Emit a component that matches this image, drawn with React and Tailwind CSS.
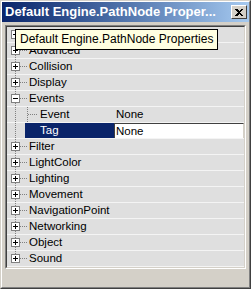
const rows = [
  { label: 'AI', kind: 'plus' },
  { label: 'Advanced', kind: 'plus' },
  { label: 'Collision', kind: 'plus' },
  { label: 'Display', kind: 'plus' },
  { label: 'Events', kind: 'minus' },
  { label: 'Event', kind: 'child', value: 'None' },
  { label: 'Tag', kind: 'child', value: 'None', last: true, selected: true },
  { label: 'Filter', kind: 'plus' },
  { label: 'LightColor', kind: 'plus' },
  { label: 'Lighting', kind: 'plus' },
  { label: 'Movement', kind: 'plus' },
  { label: 'NavigationPoint', kind: 'plus' },
  { label: 'Networking', kind: 'plus' },
  { label: 'Object', kind: 'plus' },
  { label: 'Sound', kind: 'plus' },
]

const font = { fontFamily: '"Liberation Sans", Arial, sans-serif' }

// tree connector drawing for one row
const TreeLines = ({ row, first, last }) => {
  const dots = '#808080'
  if (row.kind === 'child') {
    const c = row.selected ? '#ffffff' : dots
    return (
      <svg width="32" height="16" className="shrink-0" shapeRendering="crispEdges">
        <line x1="8.5" y1="0" x2="8.5" y2="16" stroke={dots} strokeDasharray="1 1" />
        <line x1="20.5" y1="0" x2="20.5" y2={row.last ? 7.5 : 16} stroke={c} strokeDasharray="1 1" />
        <line x1="21" y1="7.5" x2="31" y2="7.5" stroke={c} strokeDasharray="1 1" />
      </svg>
    )
  }
  return (
    <svg width="21" height="16" className="shrink-0" shapeRendering="crispEdges">
      <line x1="8.5" y1={first ? 7 : 0} x2="8.5" y2={last ? 7 : 16} stroke={dots} strokeDasharray="1 1" />
      <line x1="13" y1="7.5" x2="20" y2="7.5" stroke={dots} strokeDasharray="1 1" />
      <rect x="4.5" y="3.5" width="8" height="8" fill="#ffffff" stroke="#808080" />
      <line x1="6" y1="7.5" x2="11" y2="7.5" stroke="#000" />
      {row.kind === 'plus' && <line x1="8.5" y1="5" x2="8.5" y2="10" stroke="#000" />}
    </svg>
  )
}

const Row = ({ row, first, last }) => {
  if (row.kind === 'child') {
    return (
      <div className="flex h-[16px] border-b border-[#f4f4f4]">
        <div className="flex w-[107px] shrink-0">
          <TreeLines row={row} />
          <div
            className={
              'flex-1 h-[15px] leading-[15px] text-[11.5px] pl-[1px] ' +
              (row.selected ? 'bg-[#0a246a] text-white -ml-[14px] pl-[15px]' : 'text-black')
            }
          >
            {row.label}
          </div>
        </div>
        {row.selected ? (
          <div className="flex-1 h-[15px] bg-white border-t border-l border-[#404040] border-r border-r-[#d4d0c8] leading-[14px] text-[11.5px] pl-[1px] text-black">
            {row.value}
          </div>
        ) : (
          <div className="flex-1 leading-[15px] text-[11.5px] pl-[2px] text-black">{row.value}</div>
        )}
      </div>
    )
  }
  return (
    <div className="flex h-[16px] border-b border-[#f4f4f4]">
      <TreeLines row={row} first={first} last={last} />
      <div className="leading-[15px] text-[11.5px] pl-[1px] text-black">{row.label}</div>
    </div>
  )
}

export default function App() {
  return (
    <div className="w-[251px] h-[289px] border border-[#d4d0c8] border-r-[#404040] border-b-[#404040] bg-[#d4d0c8]" style={font}>
      <div className="relative flex flex-col h-full border border-white border-r-[#808080] border-b-[#808080]">
        <div className="flex items-center h-[20px] bg-gradient-to-r from-[#0a246a] to-[#a6caf0] pl-[3px] pr-[2px]">
          <div className="flex-1 text-white font-bold text-[13px] leading-[20px] whitespace-nowrap overflow-hidden">
            Default Engine.PathNode Proper...
          </div>
          <div className="flex items-center justify-center w-[16px] h-[14px] bg-[#d4d0c8] border border-white border-r-[#404040] border-b-[#404040]">
            <svg width="8" height="7" shapeRendering="crispEdges">
              <path d="M0 0h2l2 2 2-2h2v1l-3 2.5 3 2.5v1h-2l-2-2-2 2h-2v-1l3-2.5-3-2.5z" fill="#000" />
            </svg>
          </div>
        </div>

        <div className="mt-[3px] mx-[3px] border border-[#808080] border-r-white border-b-white">
          <div className="border border-[#404040] border-r-[#d4d0c8] border-b-[#d4d0c8] bg-[#dfdfdf]">
            {rows.map((r, i) => (
              <Row key={r.label} row={r} first={i === 0} last={i === rows.length - 1} />
            ))}
          </div>
        </div>

        <div className="absolute left-[13px] top-[27px] h-[21px] px-[4px] bg-[#ffffe1] border border-black text-black text-[12px] leading-[19px] whitespace-nowrap">
          Default Engine.PathNode Properties
        </div>
      </div>
    </div>
  )
}
